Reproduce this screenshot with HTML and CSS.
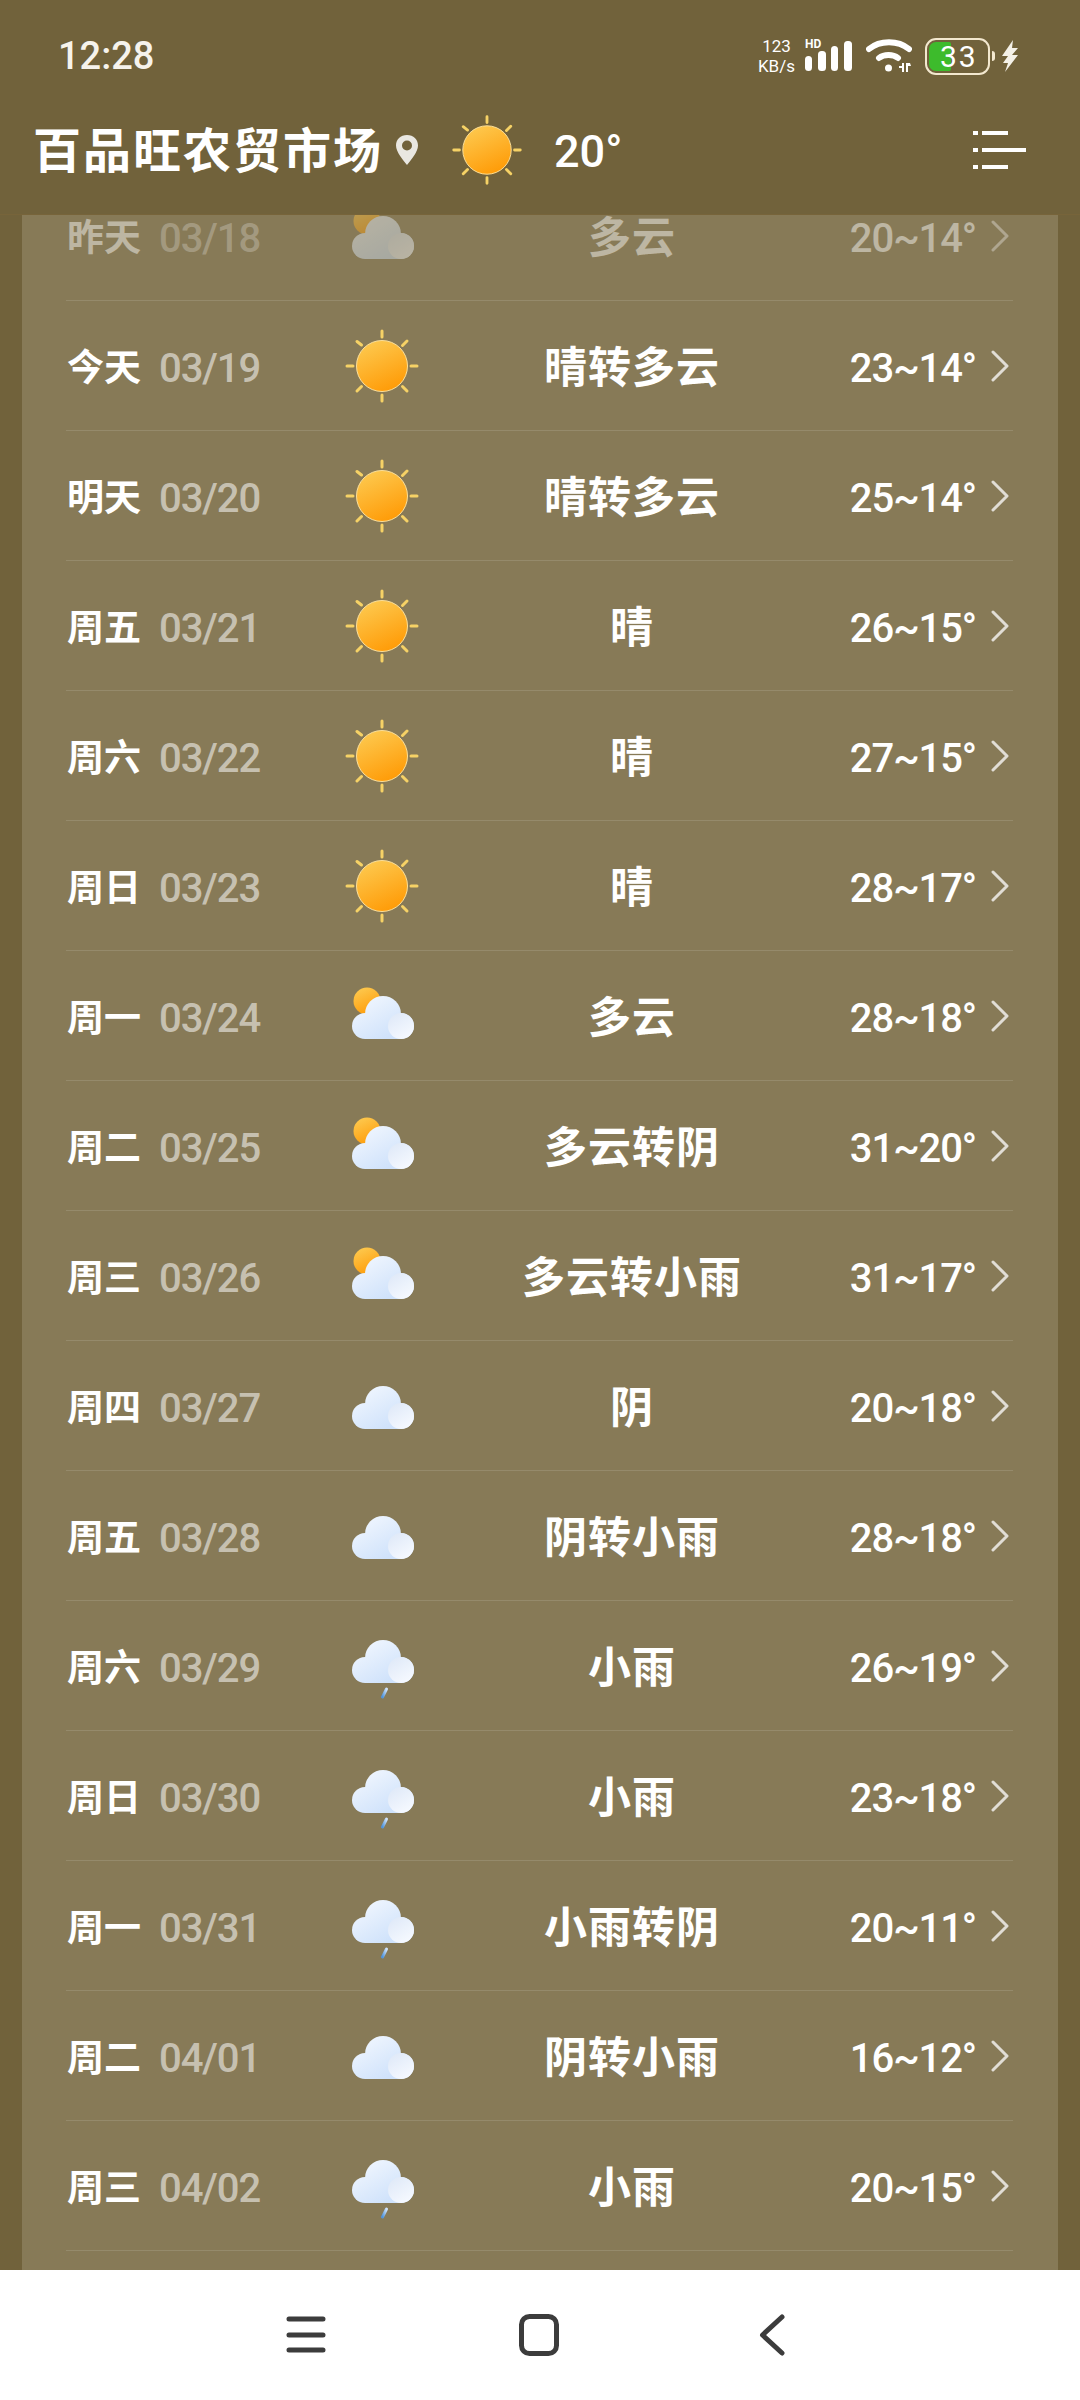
FILE: index.html
```html
<!DOCTYPE html>
<html lang="zh-CN">
<head>
    <meta charset="UTF-8">
    <meta name="viewport" content="width=device-width, initial-scale=1.0">
    <title>15日天气预报</title>
    <link rel="stylesheet" href="styles.css">
</head>
<body>

    <svg class="defs" width="0" height="0" aria-hidden="true">
        <defs>
            <linearGradient id="sunFill" x1="0.25" y1="0" x2="0.7" y2="1">
                <stop offset="0" stop-color="#fdc94f"/>
                <stop offset="1" stop-color="#ff9a05"/>
            </linearGradient>
            <linearGradient id="cloudFill" gradientUnits="userSpaceOnUse" x1="20" y1="20" x2="45" y2="63">
                <stop offset="0" stop-color="#f2f7fe"/>
                <stop offset="1" stop-color="#cfe2fb"/>
            </linearGradient>
            <linearGradient id="puffFill" x1="0.2" y1="0" x2="0.8" y2="1">
                <stop offset="0" stop-color="#dfe9f8"/>
                <stop offset="1" stop-color="#f7faff"/>
            </linearGradient>
            <linearGradient id="dropFill" x1="1" y1="0" x2="0" y2="1">
                <stop offset="0" stop-color="#cfe3fb"/>
                <stop offset="1" stop-color="#4f94dc"/>
            </linearGradient>
            <symbol id="sun" viewBox="0 0 80 80">
                <g stroke="#f6d266" stroke-width="3" stroke-linecap="round">
                    <path d="M40 5V11M40 69V75M5 40H11M69 40H75"/>
                    <path d="M15 15.500L19.500 19M65 15L60.500 19.500M15 65L19.500 60.500M65 65L60.500 60.500"/>
                </g>
                <circle cx="40" cy="40" r="25.500" fill="url(#sunFill)" stroke="#fbdf9a" stroke-width="1"/>
            </symbol>
            <symbol id="cloud" viewBox="0 0 80 80">
                <circle cx="23" cy="50" r="13" fill="url(#cloudFill)"/>
                <circle cx="41" cy="38" r="18" fill="url(#cloudFill)"/>
                <circle cx="59" cy="50" r="13" fill="url(#cloudFill)"/>
                <rect x="23" y="48" width="36" height="15" fill="url(#cloudFill)"/>
                <circle cx="59" cy="50" r="13" fill="url(#puffFill)"/>
            </symbol>
            <symbol id="sunCloud" viewBox="0 0 80 80">
                <circle cx="25" cy="25" r="13.500" fill="url(#sunFill)"/>
                <use href="#cloud" width="80" height="80"/>
            </symbol>
            <symbol id="rain" viewBox="0 0 80 80">
                <use href="#cloud" y="-6" width="80" height="80"/>
                <path d="M44.500 63L40.500 71" stroke="url(#dropFill)" stroke-width="3" stroke-linecap="round"/>
            </symbol>
        </defs>
    </svg>

    <header class="top">
        <div class="status">
            <span class="clock">12:28</span>
            <div class="status-icons">
                <span class="speed">123<br>KB/s</span>
                <svg class="signal" width="48" height="38" viewBox="0 0 48 38">
                    <text x="0" y="11" class="hd">HD</text>
                    <g fill="#fff">
                        <rect x="0" y="19" width="7" height="15" rx="3.500"/>
                        <rect x="13" y="14" width="8" height="20" rx="3.500"/>
                        <rect x="26" y="9" width="7" height="25" rx="3.500"/>
                        <rect x="39" y="4" width="8" height="30" rx="3.500"/>
                    </g>
                </svg>
                <svg class="wifi" width="46" height="38" viewBox="0 0 46 38">
                    <g fill="none" stroke="#fff" stroke-linecap="round">
                        <path d="M3 12C14 3 32 3 43 12" stroke-width="6"/>
                        <path d="M13 21C18 17 27 17 32 21" stroke-width="6"/>
                    </g>
                    <circle cx="22.500" cy="31" r="3.500" fill="#fff"/>
                    <path d="M33 29h3v-3h2v9h-2v-4h-3zM40 26h4l1 3h-3v6h-2z" fill="#fff"/>
                </svg>
                <div class="battery">
                    <div class="battery-body">
                        <span class="battery-fill"></span>
                        <span class="battery-num">33</span>
                    </div>
                    <span class="battery-nub"></span>
                </div>
                <svg class="bolt" width="18" height="32" viewBox="0 0 18 32">
                    <path d="M12 0L1 16h6L2 23l5 0-3 9L17 15h-6l6-7h-6z" fill="#f4f1e8"/>
                </svg>
            </div>
        </div>
        <div class="title-row">
            <h1 class="place">百品旺农贸市场</h1>
            <svg class="pin" width="24" height="32" viewBox="0 0 24 32">
                <path d="M12 1C5.500 1 1 5.500 1 11.500 1 18 8 26 12 31c4-5 11-13 11-19.500C23 5.500 18.500 1 12 1z" fill="#e9e7e1"/>
                <circle cx="12" cy="11.500" r="5" fill="#71623b"/>
            </svg>
            <svg class="now-icon" width="76" height="76"><use href="#sun"/></svg>
            <span class="now-temp">20°</span>
            <svg class="menu" width="54" height="40" viewBox="0 0 54 40">
                <g fill="none" stroke="#fff" stroke-width="4">
                    <path d="M0 3H5M9 3H35"/>
                    <path d="M0 20H5M9 20H53"/>
                    <path d="M0 37H5M9 37H35"/>
                </g>
            </svg>
        </div>
    </header>

    <main class="scroller">
        <section class="card">
            <div class="row past">
                <span class="day">昨天</span><span class="date">03/18</span>
                <svg class="icon"><use href="#sunCloud"/></svg>
                <span class="desc">多云</span><span class="temp">20~14°</span>
                <svg class="arrow" viewBox="0 0 18 32"><path d="M2 2L16 16L2 30"/></svg>
            </div>
            <div class="row">
                <span class="day">今天</span><span class="date">03/19</span>
                <svg class="icon"><use href="#sun"/></svg>
                <span class="desc">晴转多云</span><span class="temp">23~14°</span>
                <svg class="arrow" viewBox="0 0 18 32"><path d="M2 2L16 16L2 30"/></svg>
            </div>
            <div class="row">
                <span class="day">明天</span><span class="date">03/20</span>
                <svg class="icon"><use href="#sun"/></svg>
                <span class="desc">晴转多云</span><span class="temp">25~14°</span>
                <svg class="arrow" viewBox="0 0 18 32"><path d="M2 2L16 16L2 30"/></svg>
            </div>
            <div class="row">
                <span class="day">周五</span><span class="date">03/21</span>
                <svg class="icon"><use href="#sun"/></svg>
                <span class="desc">晴</span><span class="temp">26~15°</span>
                <svg class="arrow" viewBox="0 0 18 32"><path d="M2 2L16 16L2 30"/></svg>
            </div>
            <div class="row">
                <span class="day">周六</span><span class="date">03/22</span>
                <svg class="icon"><use href="#sun"/></svg>
                <span class="desc">晴</span><span class="temp">27~15°</span>
                <svg class="arrow" viewBox="0 0 18 32"><path d="M2 2L16 16L2 30"/></svg>
            </div>
            <div class="row">
                <span class="day">周日</span><span class="date">03/23</span>
                <svg class="icon"><use href="#sun"/></svg>
                <span class="desc">晴</span><span class="temp">28~17°</span>
                <svg class="arrow" viewBox="0 0 18 32"><path d="M2 2L16 16L2 30"/></svg>
            </div>
            <div class="row">
                <span class="day">周一</span><span class="date">03/24</span>
                <svg class="icon"><use href="#sunCloud"/></svg>
                <span class="desc">多云</span><span class="temp">28~18°</span>
                <svg class="arrow" viewBox="0 0 18 32"><path d="M2 2L16 16L2 30"/></svg>
            </div>
            <div class="row">
                <span class="day">周二</span><span class="date">03/25</span>
                <svg class="icon"><use href="#sunCloud"/></svg>
                <span class="desc">多云转阴</span><span class="temp">31~20°</span>
                <svg class="arrow" viewBox="0 0 18 32"><path d="M2 2L16 16L2 30"/></svg>
            </div>
            <div class="row">
                <span class="day">周三</span><span class="date">03/26</span>
                <svg class="icon"><use href="#sunCloud"/></svg>
                <span class="desc">多云转小雨</span><span class="temp">31~17°</span>
                <svg class="arrow" viewBox="0 0 18 32"><path d="M2 2L16 16L2 30"/></svg>
            </div>
            <div class="row">
                <span class="day">周四</span><span class="date">03/27</span>
                <svg class="icon"><use href="#cloud"/></svg>
                <span class="desc">阴</span><span class="temp">20~18°</span>
                <svg class="arrow" viewBox="0 0 18 32"><path d="M2 2L16 16L2 30"/></svg>
            </div>
            <div class="row">
                <span class="day">周五</span><span class="date">03/28</span>
                <svg class="icon"><use href="#cloud"/></svg>
                <span class="desc">阴转小雨</span><span class="temp">28~18°</span>
                <svg class="arrow" viewBox="0 0 18 32"><path d="M2 2L16 16L2 30"/></svg>
            </div>
            <div class="row">
                <span class="day">周六</span><span class="date">03/29</span>
                <svg class="icon"><use href="#rain"/></svg>
                <span class="desc">小雨</span><span class="temp">26~19°</span>
                <svg class="arrow" viewBox="0 0 18 32"><path d="M2 2L16 16L2 30"/></svg>
            </div>
            <div class="row">
                <span class="day">周日</span><span class="date">03/30</span>
                <svg class="icon"><use href="#rain"/></svg>
                <span class="desc">小雨</span><span class="temp">23~18°</span>
                <svg class="arrow" viewBox="0 0 18 32"><path d="M2 2L16 16L2 30"/></svg>
            </div>
            <div class="row">
                <span class="day">周一</span><span class="date">03/31</span>
                <svg class="icon"><use href="#rain"/></svg>
                <span class="desc">小雨转阴</span><span class="temp">20~11°</span>
                <svg class="arrow" viewBox="0 0 18 32"><path d="M2 2L16 16L2 30"/></svg>
            </div>
            <div class="row">
                <span class="day">周二</span><span class="date">04/01</span>
                <svg class="icon"><use href="#cloud"/></svg>
                <span class="desc">阴转小雨</span><span class="temp">16~12°</span>
                <svg class="arrow" viewBox="0 0 18 32"><path d="M2 2L16 16L2 30"/></svg>
            </div>
            <div class="row">
                <span class="day">周三</span><span class="date">04/02</span>
                <svg class="icon"><use href="#rain"/></svg>
                <span class="desc">小雨</span><span class="temp">20~15°</span>
                <svg class="arrow" viewBox="0 0 18 32"><path d="M2 2L16 16L2 30"/></svg>
            </div>
        </section>
    </main>

    <nav class="navbar">
        <svg width="40" height="42" viewBox="0 0 40 42">
            <path d="M3 5H37M3 21H37M3 36H37" stroke="#3c3c3c" stroke-width="5" stroke-linecap="round"/>
        </svg>
        <svg width="40" height="42" viewBox="0 0 40 42">
            <rect x="2.500" y="2.500" width="35" height="37" rx="8" fill="none" stroke="#3c3c3c" stroke-width="5"/>
        </svg>
        <svg width="40" height="42" viewBox="0 0 40 42">
            <path d="M30 3L10.500 21L30 39" fill="none" stroke="#3c3c3c" stroke-width="5" stroke-linecap="round" stroke-linejoin="round"/>
        </svg>
    </nav>

</body>
</html>
```

FILE: styles.css
```css
* {
    box-sizing: border-box;
}
body {
    margin: 0;
    width: 1080px;
    height: 2400px;
    display: flex;
    flex-direction: column;
    background-color: #71623b;
    color: #fff;
    font-family: Roboto, "Noto Sans CJK SC", sans-serif;
}
.defs {
    position: absolute;
}

/* top bar */
.top {
    height: 215px;
    flex: none;
    background-color: #71623b;
    border-bottom: 1px solid #77643a;
}
.status {
    height: 112px;
    padding: 0 61px 0 58px;
    display: flex;
    align-items: center;
    justify-content: space-between;
}
.clock {
    font-size: 38px;
    font-weight: 500;
    color: #f6f3ec;
}
.status-icons {
    display: flex;
    align-items: center;
}
.speed {
    font-size: 17px;
    line-height: 20px;
    text-align: center;
    margin-right: 10px;
}
.hd {
    font-size: 12px;
    font-weight: 700;
    fill: #fff;
}
.signal {
    margin-right: 13px;
}
.wifi {
    margin-right: 13px;
}
.battery {
    display: flex;
    align-items: center;
    margin-right: 6px;
}
.battery-body {
    width: 65px;
    height: 37px;
    border: 2px solid #f3e8cf;
    border-radius: 11px;
    padding: 2px;
    display: flex;
    position: relative;
}
.battery-fill {
    width: 22px;
    background-color: #3dbb2c;
    border-radius: 7px 2px 2px 7px;
}
.battery-num {
    position: absolute;
    left: 13px;
    top: 0;
    line-height: 33px;
    font-size: 30px;
    letter-spacing: 2px;
}
.battery-nub {
    width: 3px;
    height: 10px;
    margin-left: 2px;
    background-color: #f3e8cf;
    border-radius: 0 3px 3px 0;
}
.title-row {
    height: 76px;
    padding: 0 53px 0 33px;
    display: flex;
    align-items: center;
}
.place {
    margin: 3px 0 0;
    font-size: 48px;
    line-height: 60px;
    font-weight: 700;
    letter-spacing: 2px;
}
.pin {
    margin-left: 12px;
}
.now-icon {
    margin-left: 30px;
}
.now-temp {
    margin: 3px 0 0 29px;
    font-size: 45px;
    font-weight: 500;
}
.menu {
    margin-left: auto;
}

/* forecast list */
.scroller {
    flex: 1;
    min-height: 0;
    overflow: hidden;
    padding: 0 22px;
}
.card {
    margin-top: -44px;
    padding: 0 45px 0 44px;
    min-height: 2300px;
    background-color: #877a57;
}
.row {
    height: 130px;
    display: grid;
    grid-template-columns: 94px 182px 80px 420px 134px 1fr;
    align-items: center;
    border-bottom: 1px solid rgba(255, 255, 255, 0.12);
    line-height: 1;
    white-space: nowrap;
}
.past > * {
    opacity: 0.45;
}
.day {
    font-size: 37px;
    font-weight: 700;
    padding-left: 1px;
    margin-top: 6px;
}
.date {
    font-size: 40px;
    font-weight: 500;
    letter-spacing: -1.1px;
    margin: 6px 0 0 -1px;
    color: rgba(255, 255, 255, 0.55);
}
.icon {
    width: 80px;
    height: 80px;
}
.desc {
    font-size: 43px;
    font-weight: 700;
    letter-spacing: 1px;
    margin-top: 6px;
    text-align: center;
}
.temp {
    font-size: 40px;
    font-weight: 500;
    letter-spacing: -1.1px;
    margin-top: 6px;
    text-align: right;
}
.arrow {
    width: 18px;
    height: 32px;
    margin-left: 15px;
    fill: none;
    stroke: rgba(255, 255, 255, 0.75);
    stroke-width: 3;
    stroke-linecap: round;
    stroke-linejoin: round;
}

/* system nav */
.navbar {
    height: 130px;
    flex: none;
    background-color: #fff;
    padding-right: 2px;
    display: flex;
    align-items: center;
    justify-content: center;
    gap: 193px;
}
```
